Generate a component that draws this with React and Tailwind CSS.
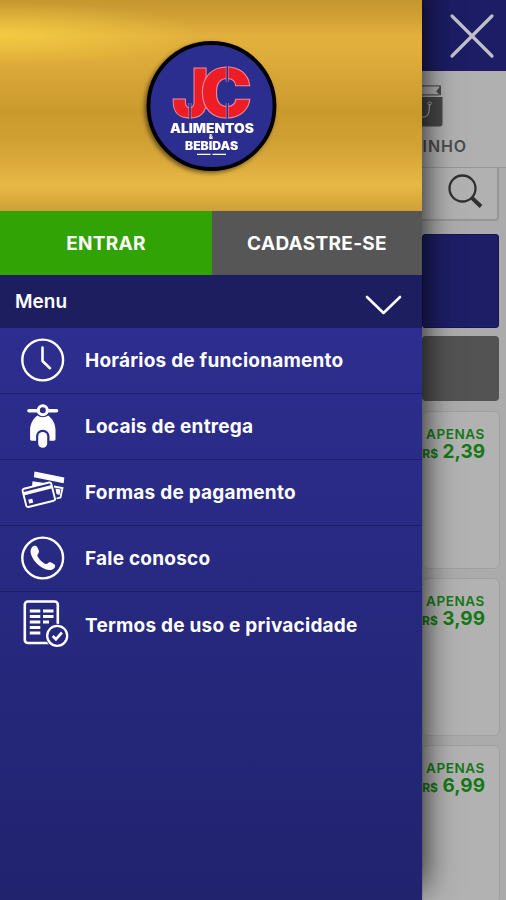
import React from "react";

const stroke = {
  fill: "none",
  stroke: "#fff",
  strokeLinecap: "round",
  strokeLinejoin: "round",
};

function ClockIcon() {
  return (
    <svg width="48" height="50" viewBox="0 0 48 50" {...stroke} strokeWidth="2.4">
      <circle cx="23.700" cy="25" r="20.400" />
      <path d="M23.500 12.500V26l7.500 7.200" strokeWidth="2.600" />
    </svg>
  );
}

function ScooterIcon() {
  return (
    <svg width="48" height="50" viewBox="0 0 48 50">
      <g fill="none" stroke="#fff" strokeLinecap="round">
        <path d="M10 9.800h9M29 9.800h8.500" strokeWidth="3.600" />
        <circle cx="23.800" cy="9.300" r="4.500" strokeWidth="3" />
      </g>
      <path
        d="M18.500 14.500c3 2.200 7.600 2.200 10.600 0 4.400 3 7.400 8.500 7.400 14.500v9c0 1.200-.6 1.700-1.600 1.700H30.500v-4c0-4-2.800-6.900-6.700-6.900s-6.700 2.900-6.700 6.900v4h-4.400c-1 0-1.600-.5-1.600-1.700V29c0-6 3-11.500 7.400-14.500z"
        fill="#fff"
      />
      <rect x="19.200" y="31" width="9" height="15.800" rx="4.500" fill="#fff" />
    </svg>
  );
}

function CardsIcon() {
  return (
    <svg width="48" height="50" viewBox="0 0 48 50">
      <path d="M15.500 4.500l29.800 6-.6 5.700-29.800-6z" fill="#fff" />
      <path d="M13.500 14.200l13.500 2-14 3.500z" fill="#fff" />
      <path d="M35 19.500l8.500 1.500-2 9.500-4 1" fill="none" stroke="#fff" strokeWidth="1.800" />
      <path d="M36.500 21.500l5 1-1 5.500-3-1z" fill="#fff" />
      <g transform="translate(3.200 22.200) rotate(-14)">
        <rect width="29.500" height="18.800" rx="1.800" fill="#282a86" stroke="#fff" strokeWidth="1.900" />
        <path d="M0 4.800h29.500" stroke="#fff" strokeWidth="3.400" />
        <rect x="3.300" y="11.600" width="4.200" height="4" rx=".6" fill="#fff" />
      </g>
    </svg>
  );
}

function PhoneIcon() {
  return (
    <svg width="48" height="50" viewBox="0 0 48 50">
      <circle cx="23.700" cy="25" r="20.400" fill="none" stroke="#fff" strokeWidth="2.400" />
      <path
        d="M13 14.200c1.300-1.800 3.800-2.100 5.200-.2l1.500 3.200c.6 1.500.2 2.600-.6 3.600-.8 1-.9 1.700-.3 2.900 1.700 3 4 5.300 7 7 1.200.6 2 .4 2.900-.5 1-.9 2-1.200 3.400-.6l3.200 1.700c1.500 1 1 3.100-.4 4.300-2.300 2-6 1.800-9 .4-6-2.800-10.700-7.200-13.300-13.100-1.400-3.200-1.500-6.500.4-8.700z"
        fill="#fff"
      />
    </svg>
  );
}

function TermsIcon() {
  return (
    <svg width="54" height="50" viewBox="0 0 54 50">
      <rect x="5.800" y="2.500" width="33" height="41.500" rx="3" fill="none" stroke="#fff" strokeWidth="2.600" />
      <path
        d="M10.800 12h10.500M24 12h10.500M10.800 17.500h10.500M24 17.500h10.500M10.800 23h10.500M24 23h6M10.800 28.500h10.500M10.800 34h10.500"
        stroke="#fff"
        strokeWidth="2.900"
      />
      <circle cx="38.200" cy="36.800" r="12" fill="#26287f" />
      <circle cx="38.200" cy="36.800" r="10" fill="none" stroke="#fff" strokeWidth="2.300" />
      <path d="M33.700 37l3.200 3.300 6-6.800" fill="none" stroke="#fff" strokeWidth="2.700" />
    </svg>
  );
}

function Logo() {
  return (
    <svg width="132" height="132" viewBox="145 40 132 132" className="drop-shadow-[-2px_2px_2px_rgba(0,0,0,0.5)]">
      <circle cx="211.500" cy="106" r="63" fill="#2c2e8f" stroke="#000" strokeWidth="3.800" />
      <g
        fontFamily="Inter, Arial, sans-serif"
        fontWeight="900"
        fontSize="67"
        fill="#ee1c25"
        stroke="#e88a9c"
        strokeWidth="1.100"
      >
        <text x="172" y="117.300" textLength="37" lengthAdjust="spacingAndGlyphs">J</text>
        <text x="200" y="117.300" textLength="52" lengthAdjust="spacingAndGlyphs">C</text>
      </g>
      <path d="M227.300 66v16M227.300 103v16M190 103v16" stroke="#e88a9c" strokeWidth="3.200" opacity=".7" />
      <path d="M227.300 65v18M227.300 103v17M190 103v17" stroke="#2c2e8f" strokeWidth="1.600" />
      <g fontFamily="Inter, Arial, sans-serif" fontWeight="900" fill="#fff">
        <text x="170" y="132.500" fontSize="13" textLength="84" lengthAdjust="spacingAndGlyphs">ALIMENTOS</text>
        <text x="209" y="139" fontSize="5.500">&amp;</text>
        <text x="185" y="149.800" fontSize="11.500" textLength="53" lengthAdjust="spacingAndGlyphs">BEBIDAS</text>
      </g>
      <path d="M197 154.300h13.500M212.500 154.300h13.500" stroke="#fff" strokeWidth="1.300" />
    </svg>
  );
}

const items = [
  { label: "Horários de funcionamento", Icon: ClockIcon },
  { label: "Locais de entrega", Icon: ScooterIcon },
  { label: "Formas de pagamento", Icon: CardsIcon },
  { label: "Fale conosco", Icon: PhoneIcon },
  { label: "Termos de uso e privacidade", Icon: TermsIcon },
];

function Drawer() {
  return (
    <aside className="relative z-10 flex h-full w-[422px] shrink-0 flex-col bg-linear-to-b from-[#2d2e90] from-35% to-[#21236f] shadow-[0_-14px_30px_2px_rgba(0,0,0,0.8)]">
      <div className="flex h-[211px] shrink-0 items-center justify-center bg-[radial-gradient(ellipse_200px_32px_at_0px_34px,rgba(255,220,70,0.6),transparent),linear-gradient(to_bottom,#c6972f_0%,#d1a136_8%,#e2b03d_17%,#deac3a_28%,#d6a436_38%,#cb9a2d_53%,#d0a033_66%,#daa93b_76%,#e7b846_88%,#deae3e_93%,#cda038_100%)]">
        <Logo />
      </div>
      <div className="flex h-16 shrink-0 text-[19px] font-bold tracking-[0.3px]">
        <button className="w-[212px] bg-[#32a305] pt-[3px]">ENTRAR</button>
        <button className="flex-1 bg-[#565656] pt-[3px]">CADASTRE-SE</button>
      </div>
      <div className="flex h-[53px] shrink-0 items-center justify-between bg-[#1c1e60] pr-5 pl-[15px] text-[19px] font-semibold">
        <span className="pt-0.5">Menu</span>
        <svg width="37" height="22" viewBox="0 0 37 22" {...stroke} strokeWidth="2.600" className="mt-1.5">
          <path d="M2 3l16.500 16L35 3" />
        </svg>
      </div>
      <nav>
        {items.map(({ label, Icon }, i) => (
          <a
            key={label}
            className={
              "flex h-[66px] items-center text-[19px] font-bold tracking-[0.22px] whitespace-nowrap " +
              (i < items.length - 1 ? "border-b border-[#1d1f6b]" : "")
            }
          >
            <span className="mb-0.5 ml-[19px] w-[66px]">
              <Icon />
            </span>
            <span className="pt-[2px]">{label}</span>
          </a>
        ))}
      </nav>
    </aside>
  );
}

function PriceCard({ price }) {
  return (
    <div className="mb-[9px] flex h-[158px] shrink-0 flex-col items-end rounded-md border border-[#a0a0a0] bg-[#b2b2b2] pt-[15px] pr-[14px] text-[#157815]">
      <span className="text-[13.500px] leading-[15px] font-semibold tracking-[0.6px]">APENAS</span>
      <span className="text-[19px] leading-[19px] font-bold whitespace-nowrap">
        <span className="text-xs">R$</span> {price}
      </span>
    </div>
  );
}

function Store() {
  return (
    <main className="flex h-full w-[84px] flex-col overflow-hidden bg-[#ababab]">
      <header className="flex h-[71px] shrink-0 items-center justify-end bg-[#1c1d64] pr-[11px]">
        <svg width="46" height="46" viewBox="0 0 46 46" fill="none" stroke="#bfc0c8" strokeWidth="3.200" strokeLinecap="round">
          <path d="M3 3l40 40M43 3L3 43" />
        </svg>
      </header>
      <div className="flex h-[97px] shrink-0 flex-col border-b border-[#969696] bg-[#b0b0b0] pt-[13px]">
        <svg width="24" height="44" viewBox="0 0 24 44">
          <path d="M0 1.800h18l-1 9H0" fill="none" stroke="#555" strokeWidth="1.200" />
          <path d="M19 1.500v10l-5-4z" fill="#484848" />
          <path d="M0 13h20.500v26.500a3 3 0 0 1-3 3H0z" fill="#484848" />
          <path d="M0 33c4 .5 6.500-1.500 7-6l.6-7" fill="none" stroke="#aaa" strokeWidth="1.300" />
          <circle cx="7.600" cy="19.500" r="1.700" fill="none" stroke="#aaa" />
        </svg>
        <div className="mt-[8px] flex w-[45px] justify-end text-[16px] leading-5 font-semibold tracking-[0.9px] text-[#4c4c4c]">CARRINHO</div>
      </div>
      <div className="mr-[7px] flex h-[53px] shrink-0 justify-end rounded-br border-r-2 border-b-2 border-[#969696] bg-[#b1b1b1] pt-[5px] pr-[12px]">
        <svg width="38" height="38" viewBox="0 0 38 38" fill="none" stroke="#303030">
          <circle cx="15.500" cy="15.500" r="13" strokeWidth="2.300" />
          <path d="M24.500 24.500l9.500 9" strokeWidth="4" />
        </svg>
      </div>
      <div className="mt-[13px] mr-[7px] h-[94px] shrink-0 rounded-[3px] border border-[#15165a] bg-[#1d1e65]" />
      <div className="mt-2 mr-[7px] mb-[10px] h-[65px] shrink-0 rounded bg-[#535353]" />
      <div className="mr-[6px] flex flex-col">
        <PriceCard price="2,39" />
        <PriceCard price="3,99" />
        <PriceCard price="6,99" />
      </div>
    </main>
  );
}

export default function App() {
  return (
    <div className="flex h-[900px] w-[506px] overflow-hidden bg-[#ababab] font-['Inter','Liberation_Sans',sans-serif] text-white">
      <Drawer />
      <Store />
    </div>
  );
}
